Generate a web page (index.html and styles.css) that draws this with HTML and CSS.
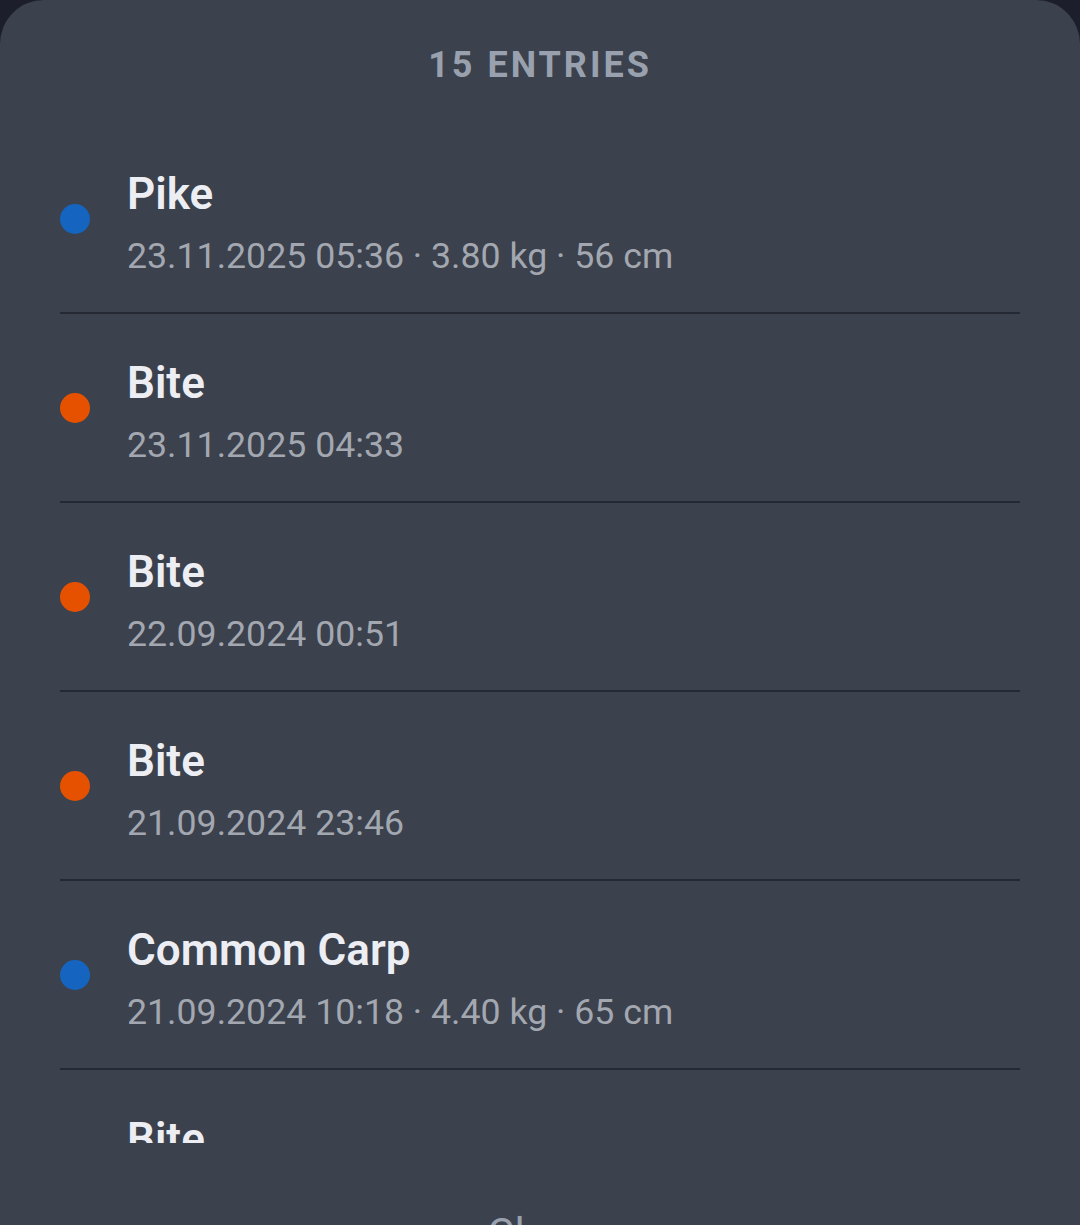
FILE: index.html
```html
<!DOCTYPE html>
<html>
<head>
<meta charset="utf-8">
<link rel="stylesheet" href="styles.css">
</head>
<body>
<div class="sheet">
  <div class="header">15 ENTRIES</div>
  <div class="list">
    <div class="row"><span class="dot catch"></span><div class="text"><div class="title">Pike</div><div class="sub">23.11.2025 05:36 · 3.80 kg · 56 cm</div></div></div>
    <div class="row"><span class="dot bite"></span><div class="text"><div class="title">Bite</div><div class="sub">23.11.2025 04:33</div></div></div>
    <div class="row"><span class="dot bite"></span><div class="text"><div class="title">Bite</div><div class="sub">22.09.2024 00:51</div></div></div>
    <div class="row"><span class="dot bite"></span><div class="text"><div class="title">Bite</div><div class="sub">21.09.2024 23:46</div></div></div>
    <div class="row"><span class="dot catch"></span><div class="text"><div class="title">Common Carp</div><div class="sub">21.09.2024 10:18 · 4.40 kg · 65 cm</div></div></div>
    <div class="row"><span class="dot bite"></span><div class="text"><div class="title">Bite</div><div class="sub">21.09.2024 09:12</div></div></div>
  </div>
  <div class="footer"><button class="close">Close</button></div>
</div>
</body>
</html>
```
FILE: styles.css
```css
html, body {
  margin: 0;
  padding: 0;
  background: #1c1f2b;
  font-family: Roboto, "Noto Sans", sans-serif;
}
.sheet {
  background: #3b414d;
  border-radius: 44px 44px 0 0;
  height: 1300px;
  display: flex;
  flex-direction: column;
}
.header {
  height: 125px;
  display: flex;
  align-items: center;
  justify-content: center;
  padding-top: 4px;
  box-sizing: border-box;
  color: #9aa1ae;
  font-size: 36px;
  font-weight: 700;
  letter-spacing: 3px;
}
.list {
  margin: 0 60px;
  height: 1018px;
  overflow: hidden;
}
.row {
  height: 189px;
  box-sizing: border-box;
  border-bottom: 2px solid #242934;
  display: flex;
  align-items: center;
  gap: 37px;
}
.dot {
  width: 30px;
  height: 30px;
  border-radius: 50%;
  flex: none;
}
.dot.catch { background: #1565c0; }
.dot.bite { background: #e65100; }
.text {
  display: flex;
  flex-direction: column;
  gap: 14px;
  padding-top: 9px;
}
.title {
  color: #eceef3;
  font-size: 44px;
  font-weight: 600;
  line-height: 52px;
}
.sub {
  color: #a3a7b0;
  font-size: 35.7px;
  line-height: 44px;
}
.footer {
  display: flex;
  justify-content: center;
  padding-top: 66px;
}
.close {
  background: none;
  border: none;
  padding: 0;
  font-family: Roboto, sans-serif;
  font-size: 42px;
  font-weight: 400;
  color: #9aa1ae;
}
```
